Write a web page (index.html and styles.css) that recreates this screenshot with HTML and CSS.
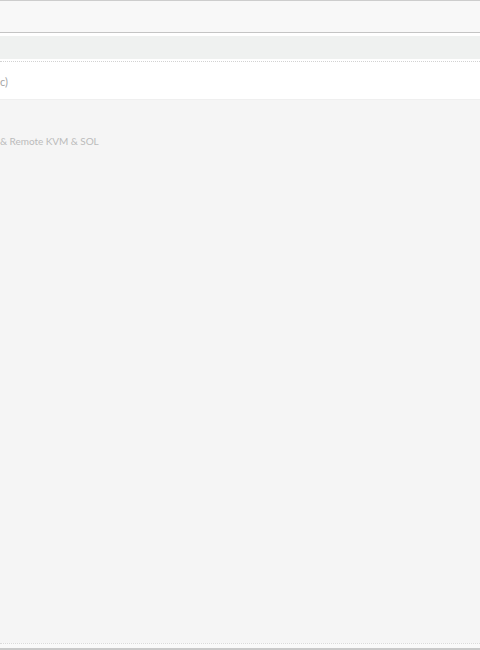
FILE: index.html
```html
<!DOCTYPE html>
<html>
<head>
<meta charset="utf-8">
<link rel="stylesheet" href="styles.css">
</head>
<body>
<div class="page">
  <header class="topbar"></header>
  <div class="gap-white"></div>
  <div class="band"></div>
  <div class="gap-white small"></div>
  <div class="row-white"><span class="cut">c)</span></div>
  <main class="content">
    <p class="feature">&amp; Remote KVM &amp; SOL</p>
  </main>
  <footer class="foot"></footer>
</div>
</body>
</html>
```
FILE: styles.css
```css
html, body {
  margin: 0;
  padding: 0;
  width: 480px;
  height: 650px;
  overflow: hidden;
  background: #f5f5f5;
  font-family: Lato, "Open Sans", sans-serif;
}
.page {
  display: flex;
  flex-direction: column;
  height: 650px;
}
.topbar {
  height: 31px;
  background: #f8f8f8;
  border-top: 1px solid #cdcdcd;
  border-bottom: 1px solid #c4c4c4;
}
.gap-white {
  height: 3px;
  background: #ffffff;
}
.gap-white.small {
  height: 2px;
  border-bottom: 1px dotted #d2d2d2;
}
.band {
  height: 23px;
  background: #eff1f0;
}
.row-white {
  height: 37px;
  background: #ffffff;
  border-bottom: 1px solid #efefef;
  display: flex;
  align-items: center;
}
.cut {
  margin-left: 0;
  font-size: 11px;
  color: #a5a5a5;
  padding-top: 2px;
}
.content {
  flex: 1;
  background: #f5f5f5;
  padding-top: 35px;
}
.feature {
  margin: 0;
  font-size: 10px;
  color: #bbbbbb;
  letter-spacing: -0.05px;
}
.foot {
  height: 4px;
  background: #f9f9f9;
  border-top: 1px dotted #dadada;
  border-bottom: 2px solid #c9c9c9;
}
```
